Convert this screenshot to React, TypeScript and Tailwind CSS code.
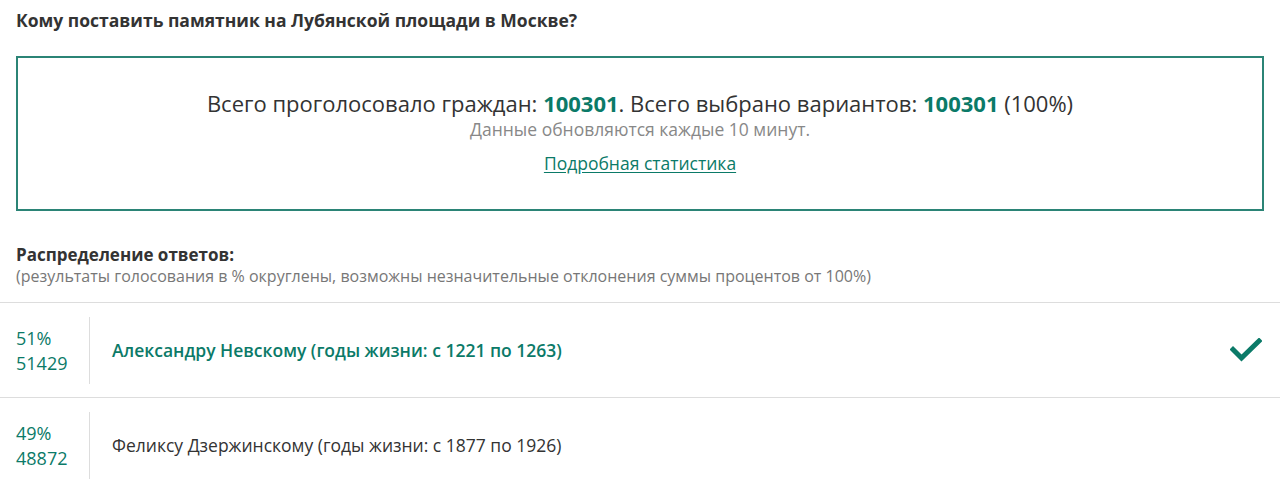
import React from 'react';

const results = [
  { pct: 51, votes: 51429, name: 'Александру Невскому (годы жизни: с 1221 по 1263)', chosen: true },
  { pct: 49, votes: 48872, name: 'Феликсу Дзержинскому (годы жизни: с 1877 по 1926)', chosen: false },
];

function Check() {
  return (
    <svg width="32" height="24" viewBox="0 0 32 24" fill="none">
      <path d="M3 11.5 L11.5 20 L29 3" stroke="#0b7a68" strokeWidth="5" strokeLinecap="square" strokeLinejoin="miter" />
    </svg>
  );
}

export default function App() {
  return (
    <div className="w-[1280px] h-[482px] overflow-hidden bg-white text-[#333] font-['Open_Sans',sans-serif]">
      <h1 className="px-4 pt-2 text-[17.5px] leading-6 font-bold">Кому поставить памятник на Лубянской площади в Москве?</h1>

      <div className="mx-4 mt-6 h-[155px] border-2 border-[#2b8476] flex flex-col items-center pt-[31px]">
        <p className="text-[22px] leading-[29px]">
          Всего проголосовало граждан: <b className="font-bold text-[#0b7a68]">100301</b>. Всего выбрано вариантов:{' '}
          <b className="font-bold text-[#0b7a68]">100301</b> (100%)
        </p>
        <p className="text-[17.5px] leading-[22px] text-[#888]">Данные обновляются каждые 10 минут.</p>
        <a href="#" className="mt-[11px] text-[17.5px] leading-6 text-[#0b7a68] underline underline-offset-2">Подробная статистика</a>
      </div>

      <div className="px-4 pt-[33px] pb-[16px]">
        <h2 className="text-[17px] leading-[22px] font-bold">Распределение ответов:</h2>
        <p className="text-[16px] leading-[20px] text-[#777]">(результаты голосования в % округлены, возможны незначительные отклонения суммы процентов от 100%)</p>
      </div>

      <div className="border-t border-[#ddd]">
        {results.map((r) => (
          <div key={r.name} className="h-[95px] border-b border-[#ddd] flex items-center">
            <div className="w-[90px] h-[67px] pl-4 border-r border-[#ddd] flex flex-col justify-center pt-[2px] text-[18px] leading-[25px] text-[#0b7a68]">
              <span>{r.pct}%</span>
              <span>{r.votes}</span>
            </div>
            <div className={`flex-1 pl-[22px] text-[17.5px] ${r.chosen ? 'font-semibold text-[#0b7a68]' : 'text-[#333]'}`}>{r.name}</div>
            {r.chosen && (
              <div className="pr-[18px]">
                <Check />
              </div>
            )}
          </div>
        ))}
      </div>
    </div>
  );
}
